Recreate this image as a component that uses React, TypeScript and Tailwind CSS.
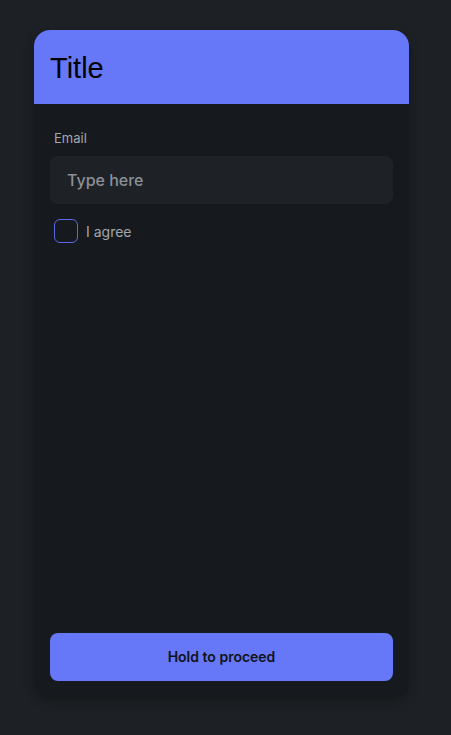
import React from "react";

export default function App() {
  return (
    <div className="min-h-[735px] w-full bg-[#1d2024] pt-[30px] pl-[34px]" style={{ fontFamily: "Inter, 'Noto Sans', sans-serif" }}>
      <div className="flex h-[667px] w-[375px] flex-col overflow-hidden rounded-[16px] bg-[#16191d] shadow-[0_4px_12px_rgba(0,0,0,0.25)]">
        <div className="flex h-[74px] items-center bg-[#6677f8] px-4">
          <h1 className="pt-[2px] text-[29px] font-normal leading-none text-black" style={{ fontFamily: "'Liberation Sans', Arial, sans-serif" }}>Title</h1>
        </div>
        <div className="flex flex-1 flex-col px-4 pt-6 pb-4">
          <label className="px-1 text-[13px] leading-5 text-[#a3a7ae]">Email</label>
          <input
            placeholder="Type here"
            className="mt-2 h-12 w-full rounded-lg bg-[#1e2125] px-[17px] text-base font-medium text-[#8b9099] placeholder:text-[#8b9099] outline-none"
          />
          <div className="mt-[15px] flex items-center gap-2 px-1">
            <div className="h-6 w-6 rounded-[6px] border border-[#5b69e6]" />
            <span className="pt-[2px] text-sm text-[#a3a7ae]">I agree</span>
          </div>
          <div className="flex-1" />
          <button className="h-12 w-full rounded-lg bg-[#6677f8] text-sm font-semibold text-[#111318]">Hold to proceed</button>
        </div>
      </div>
    </div>
  );
}
